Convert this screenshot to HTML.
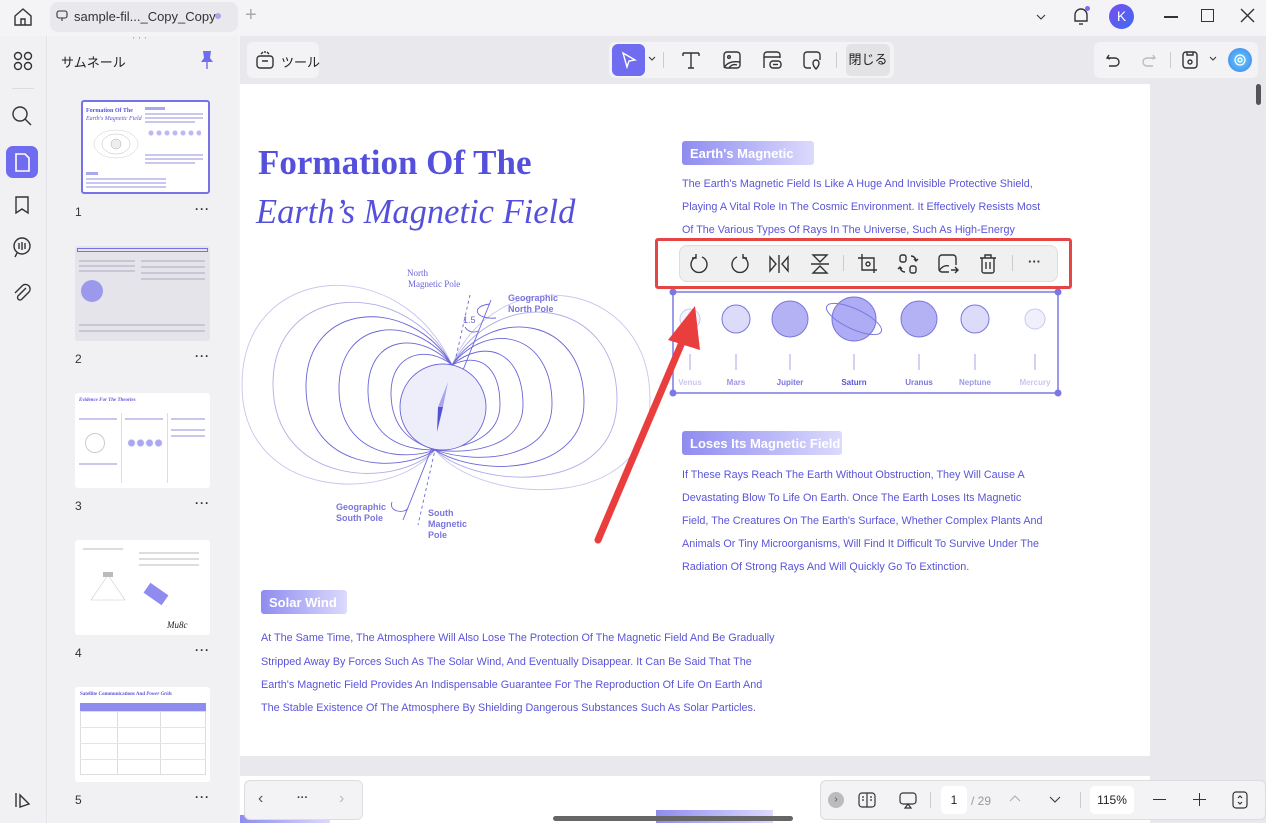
<!DOCTYPE html>
<html><head><meta charset="utf-8"><style>
*{margin:0;padding:0;box-sizing:border-box}
body{width:1266px;height:823px;overflow:hidden;background:#f4f4f6;font-family:"Liberation Sans","Noto Sans CJK JP",sans-serif;position:relative;color:#222}
.abs{position:absolute}
.ptxt{position:absolute;color:#5a55d8;font-size:10.8px;white-space:nowrap}
.tag{position:absolute;height:24px;border-radius:3px;background:linear-gradient(90deg,#8f8cf0,#dcdafc);color:#fff;font-weight:bold;font-size:13px;padding:5px 8px;white-space:nowrap;overflow:hidden}
.ic{position:absolute;stroke:#333;fill:none;stroke-width:1.4}
.thumb{position:absolute;left:75px;width:135px;height:95px;background:#fff;border-radius:3px;overflow:hidden}
.num{position:absolute;left:75px;font-size:12px;color:#333}
.dots{position:absolute;left:195px;font-size:12px;color:#333;letter-spacing:1px;font-weight:bold}
.tl{position:absolute;height:2px;background:#c9c7ee}
</style></head><body>
<!-- top bar -->
<svg class="ic" style="left:12px;top:6px" width="22" height="22" viewBox="0 0 22 22"><path d="M3 10L11 3L19 10V19H3Z"/><path d="M9 19V13H13V19"/></svg>
<div class="abs" style="left:50px;top:2px;width:188px;height:30px;background:#e9e9ed;border-radius:8px"></div>
<svg class="ic" style="left:56px;top:10px;stroke-width:1.1" width="12" height="12" viewBox="0 0 12 12"><rect x="1" y="1" width="10" height="7" rx="2"/><path d="M6 8V11"/></svg>
<div class="abs" style="left:74px;top:9px;font-size:13px;color:#333">sample-fil..._Copy_Copy</div>
<div class="abs" style="left:215px;top:13px;width:6px;height:6px;border-radius:3px;background:#aaa8e8"></div>
<div class="abs" style="left:245px;top:4px;font-size:20px;color:#aaa">+</div>
<svg class="ic" style="left:1034px;top:10px;stroke-width:1.1" width="14" height="14" viewBox="0 0 14 14"><path d="M3 5L7 9L11 5"/></svg>
<svg class="ic" style="left:1071px;top:5px" width="20" height="22" viewBox="0 0 20 22"><path d="M4 16V10A6 6 0 0 1 16 10V16H4Z"/><path d="M8 19H12"/></svg>
<div class="abs" style="left:1085px;top:6px;width:5px;height:5px;border-radius:3px;background:#7b6cf0"></div>
<div class="abs" style="left:1109px;top:4px;width:25px;height:25px;border-radius:13px;background:linear-gradient(135deg,#7a4cf0,#3d6cf0);color:#fff;font-size:14px;text-align:center;line-height:25px">K</div>
<div class="abs" style="left:1164px;top:16px;width:14px;height:1.5px;background:#333"></div>
<div class="abs" style="left:1201px;top:9px;width:13px;height:13px;border:1.4px solid #333"></div>
<svg class="ic" style="left:1240px;top:8px" width="15" height="15" viewBox="0 0 15 15"><path d="M1 1L14 14M14 1L1 14"/></svg>

<!-- left rail -->
<div class="abs" style="left:0;top:36px;width:47px;height:787px;background:#f1f1f4;border-right:1px solid #e2e2e6"></div>
<svg class="ic" style="left:12px;top:50px" width="22" height="22" viewBox="0 0 22 22"><circle cx="6" cy="6" r="3.5"/><circle cx="16" cy="6" r="3.5"/><circle cx="6" cy="16" r="3.5"/><circle cx="16" cy="16" r="3.5"/></svg>
<div class="abs" style="left:12px;top:88px;width:22px;height:1px;background:#ddd"></div>
<svg class="ic" style="left:11px;top:105px" width="22" height="22" viewBox="0 0 22 22"><circle cx="9" cy="9" r="7"/><path d="M14 14L20 20"/></svg>
<div class="abs" style="left:6px;top:146px;width:32px;height:32px;border-radius:7px;background:#6f6cf0"></div>
<svg class="ic" style="left:14px;top:153px;stroke:#fff;stroke-width:1.6" width="17" height="19" viewBox="0 0 17 19"><path d="M2 1H11L15 5V18H2Z"/></svg>
<svg class="ic" style="left:13px;top:195px" width="18" height="20" viewBox="0 0 18 20"><path d="M3 2H15V18L9 14L3 18Z"/></svg>
<svg class="ic" style="left:11px;top:236px" width="22" height="22" viewBox="0 0 22 22"><circle cx="11" cy="10" r="8"/><path d="M8 7V13M11 6V14M14 7V13M6 17L4 21"/></svg>
<svg class="ic" style="left:12px;top:282px" width="20" height="22" viewBox="0 0 20 22"><path d="M14 6L6 14A2.5 2.5 0 0 0 10 17L17 10A4.5 4.5 0 0 0 10 4L3 11"/></svg>
<svg class="ic" style="left:13px;top:790px" width="20" height="20" viewBox="0 0 20 20"><path d="M3 17V3M7 17V5L16 14Z"/></svg>

<!-- thumbnail panel -->
<div class="abs" style="left:48px;top:36px;width:190px;height:787px;background:#f1f1f4"></div>
<div class="abs" style="left:133px;top:36px;font-size:8px;color:#888;letter-spacing:1px">' ' '</div>
<div class="abs" style="left:61px;top:52px;font-size:13px;color:#222">サムネール</div>
<svg class="abs" style="left:199px;top:50px" width="16" height="20" viewBox="0 0 16 20"><path d="M4 1H12L11 8L14 12H2L5 8Z" fill="#6f6cf0"/><path d="M8 12V19" stroke="#6f6cf0" stroke-width="1.4"/></svg>

<div class="thumb" style="left:81px;top:100px;width:129px;height:94px;border:2px solid #7673e8">
 <div class="abs" style="left:3px;top:6px;font:bold 6px 'Liberation Serif';color:#5a55d8">Formation Of The</div>
 <div class="abs" style="left:3px;top:14px;font:italic 6px 'Liberation Serif';color:#5a55d8">Earth's Magnetic Field</div>
 <svg class="abs" style="left:8px;top:22px" width="50" height="40"><ellipse cx="25" cy="20" rx="22" ry="14" fill="none" stroke="#ccc" stroke-width=".5"/><ellipse cx="25" cy="20" rx="14" ry="10" fill="none" stroke="#bbb" stroke-width=".5"/><circle cx="25" cy="20" r="5" fill="#eee" stroke="#aaa" stroke-width=".5"/></svg>
 <div class="abs" style="left:62px;top:5px;width:20px;height:3px;background:#aaa8f0"></div>
 <div class="tl" style="left:62px;top:11px;width:58px"></div><div class="tl" style="left:62px;top:15px;width:58px"></div><div class="tl" style="left:62px;top:19px;width:50px"></div>
 <div class="abs" style="left:64px;top:28px;width:54px;height:6px;background:radial-gradient(circle,#bbb8f4 2px,transparent 3px) 0 0/8px 6px"></div>
 <div class="tl" style="left:62px;top:52px;width:58px"></div><div class="tl" style="left:62px;top:56px;width:58px"></div><div class="tl" style="left:62px;top:60px;width:50px"></div>
 <div class="abs" style="left:3px;top:70px;width:12px;height:3px;background:#aaa8f0"></div>
 <div class="tl" style="left:3px;top:76px;width:80px"></div><div class="tl" style="left:3px;top:80px;width:80px"></div><div class="tl" style="left:3px;top:84px;width:80px"></div>
</div>
<div class="num" style="top:205px">1</div><div class="dots" style="top:202px">···</div>

<div class="thumb" style="top:246px;background:#e4e4ea">
 <div class="abs" style="left:2px;top:2px;width:131px;height:4px;border:1px solid #7673e8"></div>
 <div class="tl" style="left:4px;top:14px;width:56px;background:#c8c8d4"></div><div class="tl" style="left:4px;top:19px;width:56px;background:#c8c8d4"></div><div class="tl" style="left:4px;top:24px;width:56px;background:#c8c8d4"></div>
 <div class="abs" style="left:6px;top:34px;width:22px;height:22px;border-radius:11px;background:#9c99ec"></div>
 <div class="tl" style="left:66px;top:14px;width:64px;background:#c8c8d4"></div><div class="tl" style="left:66px;top:20px;width:64px;background:#c8c8d4"></div><div class="tl" style="left:66px;top:26px;width:64px;background:#c8c8d4"></div><div class="tl" style="left:66px;top:32px;width:64px;background:#c8c8d4"></div>
 <div class="tl" style="left:4px;top:78px;width:126px;background:#c8c8d4"></div><div class="tl" style="left:4px;top:84px;width:126px;background:#c8c8d4"></div>
</div>
<div class="num" style="top:352px">2</div><div class="dots" style="top:349px">···</div>

<div class="thumb" style="top:393px">
 <div class="abs" style="left:4px;top:5px;font:italic bold 5px 'Liberation Serif';color:#5a55d8">Evidence For The Theories</div>
 <div class="abs" style="left:46px;top:20px;width:1px;height:70px;background:#ddd"></div><div class="abs" style="left:92px;top:20px;width:1px;height:70px;background:#ddd"></div>
 <div class="tl" style="left:4px;top:25px;width:38px"></div><div class="tl" style="left:50px;top:25px;width:38px"></div><div class="tl" style="left:96px;top:25px;width:34px"></div>
 <div class="abs" style="left:10px;top:40px;width:20px;height:20px;border-radius:10px;border:1px solid #ccc"></div>
 <div class="abs" style="left:52px;top:46px;width:36px;height:8px;background:radial-gradient(circle,#aaa8f0 3px,transparent 4px) 0 0/9px 8px"></div>
 <div class="tl" style="left:96px;top:36px;width:34px"></div><div class="tl" style="left:96px;top:42px;width:34px"></div><div class="tl" style="left:4px;top:70px;width:38px"></div>
</div>
<div class="num" style="top:499px">3</div><div class="dots" style="top:496px">···</div>

<div class="thumb" style="top:540px">
 <div class="tl" style="left:8px;top:8px;width:40px;background:#ddd"></div>
 <div class="tl" style="left:64px;top:12px;width:60px;background:#ddd"></div><div class="tl" style="left:64px;top:18px;width:60px;background:#ddd"></div><div class="tl" style="left:64px;top:24px;width:60px;background:#ddd"></div>
 <svg class="abs" style="left:8px;top:30px" width="50" height="40"><path d="M25 5L8 30H42Z" fill="none" stroke="#ccc" stroke-width=".6"/><rect x="20" y="2" width="10" height="5" fill="#bbb"/></svg>
 <div class="abs" style="left:70px;top:48px;width:22px;height:12px;background:#8f8cf0;transform:rotate(35deg)"></div>
 <div class="abs" style="left:92px;top:80px;font:italic 9px 'Liberation Serif';color:#222">Mu8c</div>
</div>
<div class="num" style="top:646px">4</div><div class="dots" style="top:643px">···</div>

<div class="thumb" style="top:687px">
 <div class="abs" style="left:5px;top:5px;font:bold 5px 'Liberation Serif';color:#5a55d8">Satellite Communications And <i>Power Grids</i></div>
 <div class="abs" style="left:5px;top:16px;width:126px;height:8px;background:#8f8cf0"></div>
 <div class="abs" style="left:5px;top:24px;width:126px;height:64px;border:1px solid #ddd"></div>
 <div class="abs" style="left:42px;top:24px;width:1px;height:64px;background:#ddd"></div><div class="abs" style="left:85px;top:24px;width:1px;height:64px;background:#ddd"></div>
 <div class="tl" style="left:5px;top:40px;width:126px;background:#e4e4e4;height:1px"></div><div class="tl" style="left:5px;top:56px;width:126px;background:#e4e4e4;height:1px"></div><div class="tl" style="left:5px;top:72px;width:126px;background:#e4e4e4;height:1px"></div>
</div>
<div class="num" style="top:793px">5</div><div class="dots" style="top:790px">···</div>

<!-- main area -->
<div class="abs" style="left:240px;top:36px;width:1026px;height:787px;background:#e9e9ed"></div>
<div class="abs" style="left:247px;top:42px;width:72px;height:36px;background:#f3f3f5;border-radius:6px"></div>
<svg class="ic" style="left:255px;top:50px" width="20" height="20" viewBox="0 0 20 20"><rect x="2" y="6" width="16" height="12" rx="3"/><path d="M7 11H13M6 4L8 2M14 4L12 2M10 3V1"/></svg>
<div class="abs" style="left:281px;top:52px;font-size:13px">ツール</div>

<div class="abs" style="left:609px;top:42px;width:285px;height:36px;background:#f3f3f5;border-radius:6px"></div>
<div class="abs" style="left:612px;top:44px;width:33px;height:32px;background:#6f6cf0;border-radius:6px"></div>
<svg class="ic" style="left:620px;top:51px;stroke:#fff" width="18" height="18" viewBox="0 0 18 18"><path d="M3 2L15 9L9 10L7 16Z"/></svg>
<svg class="ic" style="left:647px;top:55px;stroke-width:1" width="10" height="8" viewBox="0 0 10 8"><path d="M2 2L5 5L8 2"/></svg>
<div class="abs" style="left:663px;top:52px;width:1px;height:16px;background:#ccc"></div>
<svg class="ic" style="left:680px;top:49px" width="22" height="22" viewBox="0 0 22 22"><path d="M3 4H19M11 4V19M3 4V7M19 4V7M8 19H14"/></svg>
<svg class="ic" style="left:721px;top:49px" width="22" height="22" viewBox="0 0 22 22"><rect x="3" y="3" width="16" height="16" rx="3"/><path d="M3 19C6 13 12 12 19 13M8 19C10 16 13 15 16 16"/><circle cx="8" cy="8" r="1.3"/></svg>
<svg class="ic" style="left:761px;top:49px" width="22" height="22" viewBox="0 0 22 22"><path d="M3 19V6A3 3 0 0 1 6 3H16A3 3 0 0 1 19 6V9M3 8H19"/><rect x="9" y="12" width="11" height="7" rx="3"/><path d="M12 15.5H17"/></svg>
<svg class="ic" style="left:801px;top:49px" width="22" height="22" viewBox="0 0 22 22"><path d="M10 19H6A3 3 0 0 1 3 16V6A3 3 0 0 1 6 3H16A3 3 0 0 1 19 6V11"/><path d="M15 20C12 17 12 15 12 14A3 3 0 0 1 18 14C18 15 18 17 15 20Z"/></svg>
<div class="abs" style="left:836px;top:52px;width:1px;height:16px;background:#ccc"></div>
<div class="abs" style="left:846px;top:44px;width:44px;height:32px;background:#e3e3e6;border-radius:5px;font-size:13px;text-align:center;line-height:32px">閉じる</div>

<div class="abs" style="left:1094px;top:42px;width:164px;height:36px;background:#f3f3f5;border-radius:6px"></div>
<svg class="ic" style="left:1104px;top:51px" width="18" height="18" viewBox="0 0 18 18"><path d="M5 4L3 7L6 8M3 7H11A4 4 0 0 1 11 15H5"/></svg>
<svg class="ic" style="left:1140px;top:51px;stroke:#bbb" width="18" height="18" viewBox="0 0 18 18"><path d="M13 4L15 7L12 8M15 7H7A4 4 0 0 0 7 15H13"/></svg>
<div class="abs" style="left:1170px;top:52px;width:1px;height:16px;background:#ccc"></div>
<svg class="ic" style="left:1180px;top:49px" width="20" height="22" viewBox="0 0 20 22"><rect x="3" y="3" width="14" height="16" rx="3"/><path d="M7 3V6H13V3"/><circle cx="10" cy="13" r="2"/></svg>
<svg class="ic" style="left:1208px;top:55px;stroke-width:1" width="10" height="8" viewBox="0 0 10 8"><path d="M2 2L5 5L8 2"/></svg>
<div class="abs" style="left:1228px;top:48px;width:24px;height:24px;border-radius:12px;background:radial-gradient(circle,#6ad0f8,#3a7ff0)"></div>
<svg class="ic" style="left:1232px;top:52px;stroke:#fff;stroke-width:1.3" width="16" height="16" viewBox="0 0 16 16"><circle cx="8" cy="8" r="5"/><circle cx="8" cy="8" r="2"/></svg>

<div class="abs" style="left:1256px;top:84px;width:5px;height:21px;border-radius:3px;background:#555"></div>

<!-- page -->
<div class="abs" style="left:240px;top:84px;width:910px;height:672px;background:#fff"></div>
<div class="abs" style="left:258px;top:143px;font:bold 35px 'Liberation Serif',serif;color:#5550dc;white-space:nowrap">Formation Of The</div>
<div class="abs" style="left:256px;top:193px;font:italic 34.5px 'Liberation Serif',serif;color:#5550dc;white-space:nowrap">Earth’s Magnetic Field</div>

<svg class="abs" style="left:240px;top:260px" width="420" height="290" viewBox="240 260 420 290">
<g fill="none" stroke="#6a66d8" stroke-width="0.9">
<path d="M452 365C400 250 242 262 242 385C242 500 390 505 435 450" stroke="#c8c6ee"/>
<path d="M452 365C405 275 272 282 273 385C274 485 395 490 435 450" stroke="#b0ade8"/>
<path d="M452 365C410 295 305 300 306 388C307 470 398 475 435 450"/>
<path d="M452 365C414 312 338 318 339 390C340 455 402 462 435 450"/>
<path d="M452 365C420 330 367 335 368 392C369 440 405 450 435 450"/>
<path d="M452 365C428 345 390 352 391 395C392 428 410 442 435 450"/>
<path d="M452 365C495 260 650 275 650 400C650 515 480 505 435 450" stroke="#c8c6ee"/>
<path d="M452 365C495 285 617 295 617 400C617 495 480 490 435 450" stroke="#b0ade8"/>
<path d="M452 365C492 305 584 315 584 402C584 475 480 478 435 450"/>
<path d="M452 365C488 320 552 332 552 404C552 460 478 465 435 450"/>
<path d="M452 365C484 338 523 350 523 405C523 445 475 455 435 450"/>
<path d="M452 365C478 352 500 365 500 405C500 435 470 448 435 450"/>
<path d="M491 300L403 520"/>
<path d="M470 295L418 525" stroke-dasharray="3 3"/>
<path d="M465 327A10 10 0 0 0 478 331"/>
<path d="M490 304C470 306 475 320 496 318"/>
<path d="M392 502C388 512 405 514 408 508"/>
</g>
<circle cx="443" cy="407" r="43" fill="#eeeefb" stroke="#6a66d8" stroke-width="0.9"/>
<path d="M448 382L443 407L438 407Z" fill="#a8a5ee"/><path d="M443 407L438 407L437 432Z" fill="#5550dc"/>
<text x="407" y="276" font-family="Liberation Serif" font-size="9" fill="#6a66d8">North</text>
<text x="408" y="287" font-family="Liberation Serif" font-size="9" fill="#6a66d8">Magnetic Pole</text>
<text x="463" y="323" font-size="9" fill="#6a66d8" font-family="Liberation Sans">1.5</text>
<g font-family="Liberation Sans" font-size="9" font-weight="bold" fill="#7a76de">
<text x="508" y="301">Geographic</text><text x="508" y="312">North Pole</text>
<text x="336" y="510">Geographic</text><text x="336" y="521">South Pole</text>
<text x="428" y="516">South</text><text x="428" y="527">Magnetic</text><text x="428" y="538">Pole</text>
</g>
</svg>

<div class="tag" style="left:682px;top:141px;width:132px">Earth's Magnetic</div>
<div class="ptxt" style="left:682px;top:178px">The Earth's Magnetic Field Is Like A Huge And Invisible Protective Shield,</div>
<div class="ptxt" style="left:682px;top:201px">Playing A Vital Role In The Cosmic Environment. It Effectively Resists Most</div>
<div class="ptxt" style="left:682px;top:224px">Of The Various Types Of Rays In The Universe, Such As High-Energy</div>

<!-- selection + planets -->
<svg class="abs" style="left:665px;top:285px" width="405" height="120" viewBox="665 285 405 120">
<g stroke="#7b78e6" stroke-width="1.5"><path d="M673 292H1058M673 393H1058M673 292V393M1058 292V393"/></g>
<g fill="#7b78e6"><circle cx="673" cy="292" r="3.5"/><circle cx="1058" cy="292" r="3.5"/><circle cx="673" cy="393" r="3.5"/><circle cx="1058" cy="393" r="3.5"/></g>
<g stroke="#7a76de" stroke-width="1">
<circle cx="690" cy="319" r="10" fill="#f4f4fd" stroke="#c9c7ef"/>
<circle cx="736" cy="319" r="14" fill="#dcdbf9"/>
<circle cx="790" cy="319" r="18" fill="#b4b2f4"/>
<circle cx="854" cy="319" r="22" fill="#aeacf4"/>
<ellipse cx="854" cy="319" rx="30" ry="10" fill="none" transform="rotate(25 854 319)"/>
<circle cx="919" cy="319" r="18" fill="#b4b2f4"/>
<circle cx="975" cy="319" r="14" fill="#dcdbf9"/>
<circle cx="1035" cy="319" r="10" fill="#f0f0fc" stroke="#c9c7ef"/>
<path d="M690 354V370M736 354V370M790 354V370M854 354V370M919 354V370M975 354V370M1035 354V370" stroke="#a8a5ea"/>
</g>
<g font-family="Liberation Sans" font-size="8" font-weight="bold" text-anchor="middle">
<text x="690" y="385" fill="#c9c7ef">Venus</text><text x="736" y="385" fill="#9c99e6">Mars</text><text x="790" y="385" fill="#7a76de">Jupiter</text><text x="854" y="385" fill="#5a55d8">Saturn</text><text x="919" y="385" fill="#7a76de">Uranus</text><text x="975" y="385" fill="#9c99e6">Neptune</text><text x="1035" y="385" fill="#c9c7ef">Mercury</text>
</g>
</svg>

<!-- floating toolbar -->
<div class="abs" style="left:655px;top:238px;width:417px;height:51px;border:3px solid #e64545;border-radius:3px"></div>
<div class="abs" style="left:679px;top:245px;width:379px;height:37px;background:#f0f0f0;border:1px solid #ddd;border-radius:8px"></div>
<svg class="ic" style="left:688px;top:253px" width="22" height="22" viewBox="0 0 22 22"><path d="M8 4A8 8 0 1 0 14 4"/><path d="M8 1V5H4" /></svg>
<svg class="ic" style="left:729px;top:253px" width="22" height="22" viewBox="0 0 22 22"><path d="M14 4A8 8 0 1 1 8 4"/><path d="M14 1V5H18"/></svg>
<svg class="ic" style="left:768px;top:253px" width="22" height="22" viewBox="0 0 22 22"><path d="M2 4V18L8 11ZM20 4V18L14 11ZM11 2V20"/></svg>
<svg class="ic" style="left:809px;top:253px" width="22" height="22" viewBox="0 0 22 22"><path d="M4 2H18L11 9ZM4 20H18L11 13ZM2 11H20"/></svg>
<div class="abs" style="left:843px;top:255px;width:1px;height:16px;background:#ccc"></div>
<svg class="ic" style="left:857px;top:253px" width="22" height="22" viewBox="0 0 22 22"><path d="M5 1V17H20M1 5H17V20"/><circle cx="11" cy="11" r="2"/></svg>
<svg class="ic" style="left:897px;top:253px" width="22" height="22" viewBox="0 0 22 22"><rect x="3" y="2" width="6" height="7" rx="2"/><rect x="13" y="13" width="6" height="7" rx="2"/><path d="M14 3A5 5 0 0 1 19 8M17 6L19 8L21 6M8 19A5 5 0 0 1 3 14M5 16L3 14L1 16"/></svg>
<svg class="ic" style="left:937px;top:253px" width="22" height="22" viewBox="0 0 22 22"><path d="M12 19H5A3 3 0 0 1 2 16V5A3 3 0 0 1 5 2H16A3 3 0 0 1 19 5V12"/><path d="M2 18C5 13 9 12 12 13M14 17H21M18 14L21 17L18 20"/></svg>
<svg class="ic" style="left:977px;top:253px" width="22" height="22" viewBox="0 0 22 22"><path d="M3 5H19M8 5V2H14V5M5 5V18A2 2 0 0 0 7 20H15A2 2 0 0 0 17 18V5M9 9V16M13 9V16"/></svg>
<div class="abs" style="left:1012px;top:255px;width:1px;height:16px;background:#ccc"></div>
<div class="abs" style="left:1028px;top:254px;font-size:13px;font-weight:bold;color:#333">···</div>

<!-- red arrow -->
<svg class="abs" style="left:590px;top:300px" width="120" height="250" viewBox="590 300 120 250">
<path d="M598 540L683 340" stroke="#ea3d3d" stroke-width="7" stroke-linecap="round"/>
<path d="M695 306L668 340L700 350Z" fill="#ea3d3d"/>
</svg>

<div class="tag" style="left:682px;top:431px;width:160px">Loses Its Magnetic Field</div>
<div class="ptxt" style="left:682px;top:469px">If These Rays Reach The Earth Without Obstruction, They Will Cause A</div>
<div class="ptxt" style="left:682px;top:492px">Devastating Blow To Life On Earth. Once The Earth Loses Its Magnetic</div>
<div class="ptxt" style="left:682px;top:515px">Field, The Creatures On The Earth's Surface, Whether Complex Plants And</div>
<div class="ptxt" style="left:682px;top:538px">Animals Or Tiny Microorganisms, Will Find It Difficult To Survive Under The</div>
<div class="ptxt" style="left:682px;top:561px">Radiation Of Strong Rays And Will Quickly Go To Extinction.</div>

<div class="tag" style="left:261px;top:590px;width:86px">Solar Wind</div>
<div class="ptxt" style="left:261px;top:632px">At The Same Time, The Atmosphere Will Also Lose The Protection Of The Magnetic Field And Be Gradually</div>
<div class="ptxt" style="left:261px;top:656px">Stripped Away By Forces Such As The Solar Wind, And Eventually Disappear. It Can Be Said That The</div>
<div class="ptxt" style="left:261px;top:679px">Earth's Magnetic Field Provides An Indispensable Guarantee For The Reproduction Of Life On Earth And</div>
<div class="ptxt" style="left:261px;top:702px">The Stable Existence Of The Atmosphere By Shielding Dangerous Substances Such As Solar Particles.</div>

<!-- next page peek -->
<div class="abs" style="left:240px;top:776px;width:910px;height:47px;background:#fff"></div>
<div class="abs" style="left:656px;top:810px;width:117px;height:13px;background:linear-gradient(90deg,#8f8cf0,#dcdafc)"></div>
<div class="abs" style="left:240px;top:815px;width:90px;height:8px;background:linear-gradient(90deg,#8f8cf0,#dcdafc)"></div>
<div class="abs" style="left:553px;top:816px;width:240px;height:5px;border-radius:3px;background:#666"></div>

<!-- bottom-left nav -->
<div class="abs" style="left:244px;top:780px;width:119px;height:40px;background:#f3f3f5;border:1px solid #ddd;border-radius:6px"></div>
<div class="abs" style="left:258px;top:790px;font-size:16px;color:#555">‹</div>
<div class="abs" style="left:297px;top:792px;font-size:11px;font-weight:bold;color:#333">···</div>
<div class="abs" style="left:339px;top:790px;font-size:16px;color:#bbb">›</div>

<!-- bottom-right -->
<div class="abs" style="left:820px;top:780px;width:446px;height:40px;background:#f3f3f5;border:1px solid #ddd;border-radius:6px"></div>
<div class="abs" style="left:828px;top:792px;width:16px;height:16px;border-radius:8px;background:#bbb;color:#555;font-size:10px;text-align:center;line-height:16px">›</div>
<svg class="ic" style="left:857px;top:790px;stroke-width:1.2" width="20" height="20" viewBox="0 0 20 20"><rect x="2" y="3" width="16" height="14" rx="3"/><path d="M10 3V17M5 7H7M5 10H7M13 7H15M13 10H15"/></svg>
<svg class="ic" style="left:898px;top:790px;stroke-width:1.2" width="20" height="20" viewBox="0 0 20 20"><rect x="2" y="3" width="16" height="11" rx="3"/><path d="M10 14L7 18H13Z"/></svg>
<div class="abs" style="left:930px;top:792px;width:1px;height:16px;background:#ccc"></div>
<div class="abs" style="left:941px;top:786px;width:26px;height:28px;background:#fff;border-radius:5px;font-size:12px;text-align:center;line-height:28px">1</div>
<div class="abs" style="left:971px;top:794px;font-size:12px;color:#999">/ 29</div>
<svg class="ic" style="left:1008px;top:792px;stroke:#aaa;stroke-width:1" width="14" height="14" viewBox="0 0 14 14"><path d="M2 9L7 4L12 9"/></svg>
<svg class="ic" style="left:1048px;top:792px;stroke-width:1" width="14" height="14" viewBox="0 0 14 14"><path d="M2 5L7 10L12 5"/></svg>
<div class="abs" style="left:1080px;top:792px;width:1px;height:16px;background:#ccc"></div>
<div class="abs" style="left:1090px;top:786px;width:44px;height:28px;background:#fff;border-radius:5px;font-size:12px;text-align:center;line-height:28px">115%</div>
<div class="abs" style="left:1153px;top:799px;width:13px;height:1.4px;background:#333"></div>
<div class="abs" style="left:1193px;top:799px;width:13px;height:1.4px;background:#333"></div>
<div class="abs" style="left:1199px;top:793px;width:1.4px;height:13px;background:#333"></div>
<svg class="ic" style="left:1231px;top:790px;stroke-width:1.2" width="18" height="20" viewBox="0 0 18 20"><rect x="2" y="2" width="14" height="16" rx="3"/><path d="M7 8L9 6L11 8M7 12L9 14L11 12"/></svg>
</body></html>
